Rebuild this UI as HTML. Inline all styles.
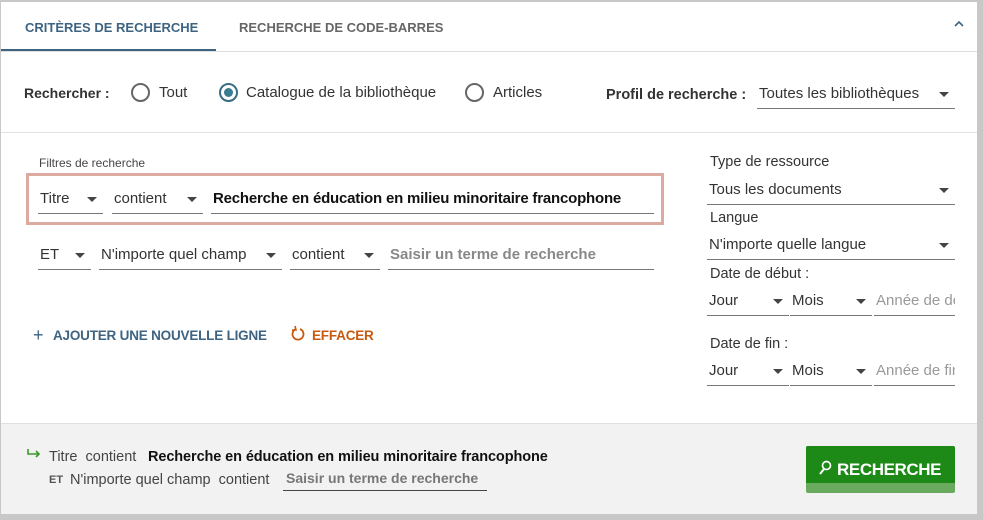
<!DOCTYPE html>
<html><head><meta charset="utf-8"><style>
*{margin:0;padding:0;box-sizing:border-box}
body{width:983px;height:520px;background:#c8c8c8;font-family:"Liberation Sans",sans-serif;position:relative;overflow:hidden;color:#333;font-size:14px;letter-spacing:0}
.card{position:absolute;left:1px;top:2px;width:976px;height:512px;background:#fff}
.a{position:absolute;white-space:nowrap}
.f{position:absolute;border-bottom:1px solid #777;height:28px;line-height:26px;font-size:15px;color:#333;white-space:nowrap;overflow:hidden;padding-left:2px}
.c{position:absolute;right:6px;top:11px;width:0;height:0;border-left:5px solid transparent;border-right:5px solid transparent;border-top:5px solid #444}
.ph{color:#888;font-weight:bold}
.radio{position:absolute;width:19px;height:19px;border:2px solid #666;border-radius:50%}
</style></head><body>
<div class="card">
 <div class="a" style="left:24px;top:18px;font-size:13px;color:#3e6482;font-weight:bold">CRITÈRES DE RECHERCHE</div>
 <div class="a" style="left:238px;top:18px;font-size:13px;color:#666;font-weight:bold">RECHERCHE DE CODE-BARRES</div>
 <div class="a" style="left:0;top:47px;width:215px;height:3px;background:#3e6482"></div>
 <div class="a" style="left:0;top:49px;width:976px;height:1px;background:#ddd"></div>
 <svg class="a" style="left:952px;top:18px" width="12" height="8"><path d="M2 6 L6 2 L10 6" stroke="#3e6482" stroke-width="1.6" fill="none"/></svg>

 <div class="a" style="left:23px;top:83px;font-weight:bold;font-size:14px">Rechercher :</div>
 <div class="radio" style="left:130px;top:81px"></div>
 <div class="a" style="left:158px;top:82px;font-size:15px">Tout</div>
 <div class="radio" style="left:218px;top:81px;border-color:#3a6d80"></div>
 <div class="a" style="left:223px;top:86px;width:9px;height:9px;border-radius:50%;background:#3a7d90"></div>
 <div class="a" style="left:245px;top:82px;font-size:15px">Catalogue de la bibliothèque</div>
 <div class="radio" style="left:464px;top:81px"></div>
 <div class="a" style="left:492px;top:82px;font-size:15px">Articles</div>
 <div class="a" style="left:605px;top:85px;font-weight:bold;font-size:14.5px">Profil de recherche :</div>
 <div class="f" style="left:756px;top:79px;width:198px">Toutes les bibliothèques<span class="c"></span></div>
 <div class="a" style="left:0;top:130px;width:976px;height:1px;background:#e2e2e2"></div>

 <div class="a" style="left:38px;top:154px;font-size:12px;color:#444">Filtres de recherche</div>
 <div class="a" style="left:25px;top:171px;width:638px;height:52px;border:3px solid #ddaaa2"></div>
 <div class="f" style="left:37px;top:184px;width:65px">Titre<span class="c"></span></div>
 <div class="f" style="left:111px;top:184px;width:91px">contient<span class="c"></span></div>
 <div class="f" style="left:210px;top:184px;width:443px;font-weight:bold;color:#111;letter-spacing:-0.2px">Recherche en éducation en milieu minoritaire francophone</div>

 <div class="f" style="left:37px;top:240px;width:53px">ET<span class="c"></span></div>
 <div class="f" style="left:98px;top:240px;width:183px">N'importe quel champ<span class="c"></span></div>
 <div class="f" style="left:289px;top:240px;width:90px">contient<span class="c"></span></div>
 <div class="f ph" style="left:387px;top:240px;width:266px">Saisir un terme de recherche</div>

 <div class="a" style="left:32px;top:323px;color:#3e6482;font-size:18px">+</div>
 <div class="a" style="left:52px;top:326px;color:#3e6482;font-size:13.5px;font-weight:bold;letter-spacing:-0.2px">AJOUTER UNE NOUVELLE LIGNE</div>
 <svg class="a" style="left:290px;top:323px" width="16" height="18"><path d="M5 4 A5.5 5.5 0 1 0 9 4" stroke="#c85a10" stroke-width="1.8" fill="none"/><path d="M4 1 L5 5 L1 5" stroke="#c85a10" stroke-width="1.6" fill="none"/></svg>
 <div class="a" style="left:311px;top:326px;color:#c85a10;font-size:13.5px;font-weight:bold;letter-spacing:-0.2px">EFFACER</div>

 <div class="a" style="left:709px;top:152px;font-size:14.5px">Type de ressource</div>
 <div class="f" style="left:706px;top:175px;width:248px">Tous les documents<span class="c"></span></div>
 <div class="a" style="left:709px;top:208px;font-size:14.5px">Langue</div>
 <div class="f" style="left:706px;top:230px;width:248px">N'importe quelle langue<span class="c"></span></div>
 <div class="a" style="left:709px;top:264px;font-size:14.5px">Date de début :</div>
 <div class="f" style="left:706px;top:286px;width:82px">Jour<span class="c"></span></div>
 <div class="f" style="left:789px;top:286px;width:82px">Mois<span class="c"></span></div>
 <div class="f" style="left:873px;top:286px;width:81px;color:#999">Année de début</div>
 <div class="a" style="left:709px;top:334px;font-size:14.5px">Date de fin :</div>
 <div class="f" style="left:706px;top:356px;width:82px">Jour<span class="c"></span></div>
 <div class="f" style="left:789px;top:356px;width:82px">Mois<span class="c"></span></div>
 <div class="f" style="left:873px;top:356px;width:81px;color:#999">Année de fin</div>

 <div class="a" style="left:0;top:421px;width:976px;height:91px;background:#f2f2f2;border-top:1px solid #e0e0e0"></div>
 <svg class="a" style="left:25px;top:446px" width="16" height="12"><path d="M2 1 V6 H13 M10 3 L13 6 L10 9" stroke="#3a9a2a" stroke-width="1.6" fill="none"/></svg>
 <div class="a" style="left:48px;top:447px;font-size:14.5px;color:#444">Titre&nbsp; contient</div>
 <div class="a" style="left:147px;top:447px;font-size:14.5px;font-weight:bold;color:#111;letter-spacing:-0.1px">Recherche en éducation en milieu minoritaire francophone</div>
 <div class="a" style="left:48px;top:472px;font-size:11px;font-weight:bold;color:#555">ET</div>
 <div class="a" style="left:69px;top:470px;font-size:14.5px;color:#444">N'importe quel champ&nbsp; contient</div>
 <div class="a" style="left:282px;top:468px;width:204px;height:21px;border-bottom:1px solid #444;font-size:14px;font-weight:bold;color:#777;padding-left:3px">Saisir un terme de recherche</div>

 <div class="a" style="left:805px;top:444px;width:149px;height:47px;background:#6aaa5e;border-radius:2px"></div>
 <div class="a" style="left:805px;top:444px;width:149px;height:37px;background:#1d8a17;border-radius:2px 2px 0 0"></div>
 <svg class="a" style="left:817px;top:458px" width="14" height="16"><circle cx="8.5" cy="5.5" r="4" stroke="#fff" stroke-width="1.7" fill="none"/><path d="M6 9 L2 14" stroke="#fff" stroke-width="2"/></svg>
 <div class="a" style="left:836px;top:458px;color:#fff;font-weight:bold;font-size:17px;letter-spacing:-0.4px">RECHERCHE</div>
</div>
</body></html>
